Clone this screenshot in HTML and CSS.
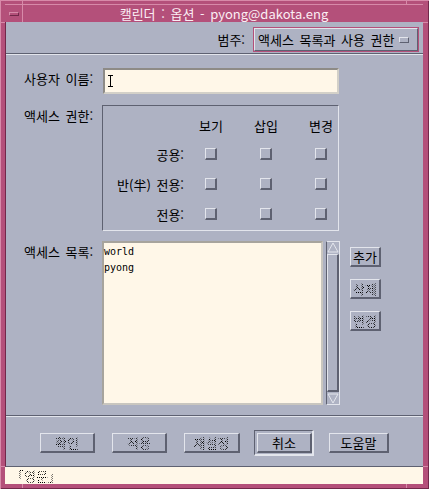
FILE: index.html
```html
<!DOCTYPE html>
<html lang="ko">
	<head>
		<meta charset="utf-8">
		<title>캘린더 : 옵션</title>
		<link rel="stylesheet" href="styles.css">
	</head>
	<body>
		<div class="window">
			<div class="titlebar">
				<div class="menu-btn"><span></span></div>
				<div class="title">캘린더 : 옵션 - pyong@dakota.eng</div>
			</div>
			<div class="client">
				<div class="category">
					<span class="cat-label">범주:</span>
					<div class="option-menu">
						<span>액세스 목록과 사용 권한</span>
						<i class="indicator"></i>
					</div>
				</div>
				<div class="form">
					<div class="field-label">사용자 이름:</div>
					<div class="textfield"><span class="caret"></span></div>

					<div class="field-label">액세스 권한:</div>
					<div class="group">
						<span></span>
						<span class="col-head">보기</span>
						<span class="col-head">삽입</span>
						<span class="col-head">변경</span>

						<span class="row-label">공용:</span>
						<span class="check"></span>
						<span class="check"></span>
						<span class="check"></span>

						<span class="row-label">반(半) 전용:</span>
						<span class="check"></span>
						<span class="check"></span>
						<span class="check"></span>

						<span class="row-label">전용:</span>
						<span class="check"></span>
						<span class="check"></span>
						<span class="check"></span>
					</div>

					<div class="field-label">액세스 목록:</div>
					<div class="list-area">
						<div class="list">
							<div>world</div>
							<div>pyong</div>
						</div>
						<div class="scrollbar">
							<svg class="arrow" width="12" height="11" viewBox="0 0 12 11"><polygon points="6,1 11,10 1,10" fill="none" stroke="#e4e6ed"/></svg>
							<div class="slider"></div>
							<svg class="arrow" width="12" height="11" viewBox="0 0 12 11"><polygon points="1,1 11,1 6,10" fill="none" stroke="#e4e6ed"/></svg>
						</div>
						<div class="side-buttons">
							<button class="btn small">추가</button>
							<button class="btn small disabled">삭제</button>
							<button class="btn small disabled">변경</button>
						</div>
					</div>
				</div>
				<div class="actions">
					<button class="btn disabled">확인</button>
					<button class="btn disabled">적용</button>
					<button class="btn reset disabled">재설정</button>
					<button class="btn default">취소</button>
					<button class="btn help">도움말</button>
				</div>
			</div>
			<div class="status"><span class="disabled">「영문」</span></div>
		</div>
	</body>
</html>
```

FILE: styles.css
```css
:root {
	--bg: #aeb2c3;
	--light: #e3e5ec;
	--dark: #5e6171;
	--pink: #b4507a;
	--pink-light: #d78aa9;
	--pink-dark: #72284a;
	--cream: #fff7e8;
}
body {
	margin: 0;
	font-family: "Noto Sans CJK KR", "Noto Sans", sans-serif;
	font-size: 13px;
	word-spacing: 2px;
	color: #000;
}
button {
	font: inherit;
	color: inherit;
	cursor: pointer;
}
.disabled {
	color: transparent;
	background-image: repeating-conic-gradient(#000 0 25%, transparent 0 50%);
	background-size: 2px 2px;
	-webkit-background-clip: text;
	background-clip: text;
}
.window {
	width: 429px;
	height: 489px;
	box-sizing: border-box;
	padding: 4px 6px 5px 5px;
	background-color: var(--pink);
	/* resize-corner marks in the frame */
	background-image:
		linear-gradient(var(--pink-light), var(--pink-light)),
		linear-gradient(var(--pink-light), var(--pink-light)),
		linear-gradient(var(--pink-light), var(--pink-light)),
		linear-gradient(var(--pink-light), var(--pink-light)),
		linear-gradient(var(--pink-light), var(--pink-light)),
		linear-gradient(var(--pink-light), var(--pink-light)),
		linear-gradient(var(--pink-light), var(--pink-light)),
		linear-gradient(var(--pink-light), var(--pink-light));
	background-size: 1px 4px, 1px 4px, 1px 5px, 1px 5px, 5px 1px, 5px 1px, 6px 1px, 6px 1px;
	background-position: 22px 0, 406px 0, 22px 484px, 406px 484px, 0 22px, 0 466px, 423px 22px, 423px 466px;
	background-repeat: no-repeat;
	box-shadow: inset 1px 1px 0 var(--pink-light), inset -1px -1px 0 var(--pink-dark);
	display: flex;
	flex-direction: column;
}
.titlebar {
	height: 18px;
	display: flex;
	background: var(--pink);
	border-top: 1px solid var(--pink-light);
	box-sizing: border-box;
}
.menu-btn {
	width: 17px;
	border-right: 1px solid var(--pink-light);
	display: flex;
	align-items: center;
	justify-content: center;
}
.menu-btn span {
	width: 10px;
	height: 4px;
	box-sizing: border-box;
	border: 1px solid;
	border-color: var(--pink-light) var(--pink-dark) var(--pink-dark) var(--pink-light);
}
.title {
	flex: 1;
	text-align: center;
	color: #fbeef4;
	line-height: 17px;
	padding-left: 2px;
}
.client {
	flex: 1;
	background: var(--bg);
	display: flex;
	flex-direction: column;
	border-left: 1px solid var(--pink-dark);
	border-bottom: 1px solid var(--dark);
}
.category {
	height: 32px;
	box-sizing: border-box;
	padding: 5px 4px 0 0;
	display: flex;
	justify-content: flex-end;
	align-items: flex-start;
	border-bottom: 1px solid var(--dark);
}
.cat-label {
	line-height: 25px;
	margin-right: 8px;
}
.option-menu {
	width: 166px;
	height: 25px;
	box-sizing: border-box;
	border: 1px solid var(--pink);
	display: flex;
	align-items: center;
}
.option-menu span {
	flex: 1;
	height: 23px;
	line-height: 21px;
	box-sizing: border-box;
	padding-left: 3px;
	border: 1px solid;
	border-color: var(--light) var(--dark) var(--dark) var(--light);
	display: flex;
	align-items: center;
}
.indicator {
	width: 10px;
	height: 6px;
	box-sizing: border-box;
	border: 1px solid;
	border-color: var(--light) var(--dark) var(--dark) var(--light);
	margin-left: -19px;
	margin-right: 9px;
}
.form {
	border-top: 1px solid var(--light);
	border-bottom: 1px solid var(--dark);
	padding: 13px 0 10px 18px;
	display: grid;
	grid-template-columns: 78px auto;
	row-gap: 11px;
	justify-content: start;
}
.field-label {
	padding-top: 3px;
	line-height: 16px;
	white-space: nowrap;
}
.textfield {
	width: 236px;
	height: 26px;
	box-sizing: border-box;
	margin-left: 1px;
	background: var(--cream);
	border: 2px solid;
	border-color: #8e8b86 #d3d0c8 #d3d0c8 #8e8b86;
	display: flex;
	align-items: center;
	padding-left: 3px;
}
.caret {
	width: 5px;
	height: 12px;
	box-sizing: border-box;
	border-top: 1px solid #000;
	border-bottom: 1px solid #000;
	background: linear-gradient(#000, #000) center / 1px 100% no-repeat;
}
.group {
	width: 237px;
	height: 126px;
	box-sizing: border-box;
	margin-bottom: -1px;
	border: 1px solid;
	border-color: var(--dark) var(--light) var(--light) var(--dark);
	padding-top: 5px;
	display: grid;
	grid-template-columns: 68px 30px 30px 30px;
	grid-template-rows: 28px 30px 30px 30px;
	column-gap: 25px;
	align-items: center;
	justify-items: center;
}
.row-label {
	justify-self: end;
	margin-right: -13px;
	white-space: nowrap;
}
.check {
	width: 12px;
	height: 12px;
	box-sizing: border-box;
	border: 1px solid;
	border-color: var(--light) var(--dark) var(--dark) var(--light);
	border-right-width: 2px;
	border-bottom-width: 2px;
}
.list-area {
	display: flex;
	align-items: flex-start;
}
.list {
	width: 221px;
	height: 164px;
	box-sizing: border-box;
	background: var(--cream);
	border: 2px solid;
	border-color: #a7a49d #c9c6bf #c9c6bf #a7a49d;
	padding: 1px 0 0 0;
	font-family: "DejaVu Sans Mono", "Liberation Mono", monospace;
	font-size: 10px;
	line-height: 16px;
	word-spacing: 0;
}
.scrollbar {
	width: 14px;
	height: 164px;
	box-sizing: border-box;
	margin-left: 3px;
	border: 1px solid;
	border-color: var(--light) var(--light) var(--light) var(--dark);
	display: flex;
	flex-direction: column;
	align-items: center;
}
.arrow {
	flex: none;
}
.slider {
	flex: 1;
	width: 12px;
	box-sizing: border-box;
	margin: 1px 0;
	border: 1px solid;
	border-color: var(--light) var(--dark) var(--dark) var(--light);
	border-right-width: 2px;
	border-bottom-width: 2px;
}
.side-buttons {
	display: flex;
	flex-direction: column;
	gap: 12px;
	margin: 6px 0 0 10px;
}
.btn {
	height: 20px;
	box-sizing: border-box;
	padding: 0;
	background-color: var(--bg);
	border: 1px solid;
	border-color: var(--light) var(--dark) var(--dark) var(--light);
	border-right-width: 2px;
	border-bottom-width: 2px;
	line-height: 16px;
	width: 55px;
}
.btn.small {
	width: 31px;
}
.btn.reset {
	width: 56px;
}
.btn.help {
	width: 60px;
}
.btn.default {
	position: relative;
}
.btn.default::before {
	content: "";
	position: absolute;
	inset: -4px -4px -5px -4px;
	border: 1px solid;
	border-color: var(--dark) var(--light) var(--light) var(--dark);
	border-right-width: 2px;
	border-bottom-width: 2px;
}
.actions {
	flex: 1;
	border-top: 1px solid var(--light);
	padding: 16px 0 0 34px;
	display: flex;
	align-items: flex-start;
	gap: 17px;
}
.status {
	height: 17px;
	background: var(--cream);
	padding-left: 6px;
	line-height: 17px;
}
```
